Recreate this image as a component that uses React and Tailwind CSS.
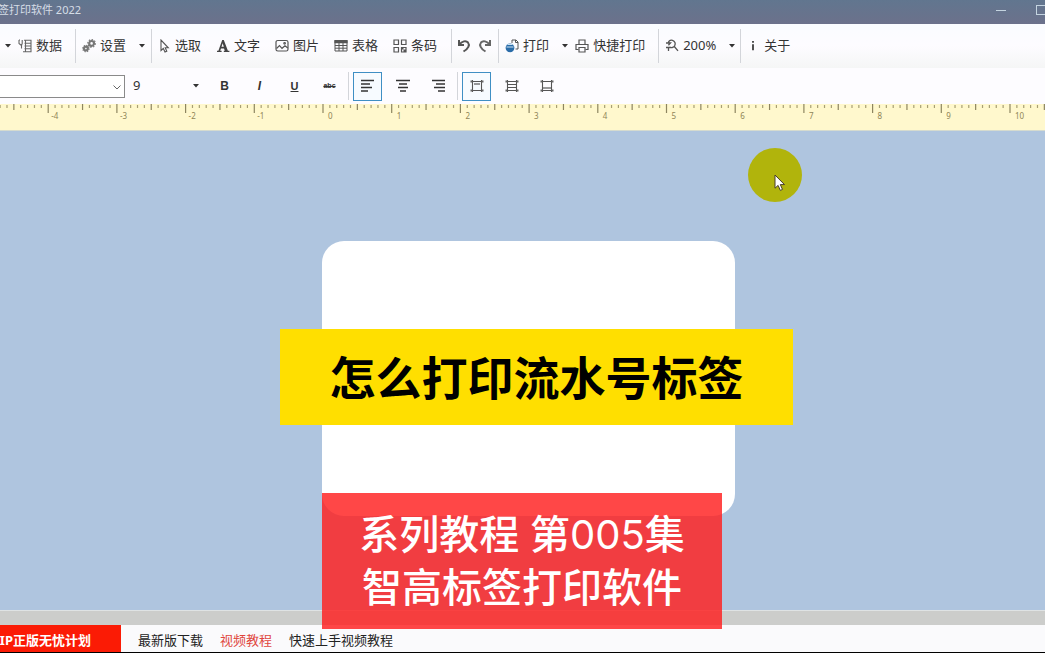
import React from "react";

const MM_PER_CM = 10;
const CM = 68.7;
const RULER_ORIGIN = 323;

const minorTick = "#a79f74";
const majorTick = "#8d8560";

const footerLinks = [
  { text: "最新版下载", className: "text-[#222]" },
  { text: "视频教程", className: "text-[#e0453c]" },
  { text: "快速上手视频教程", className: "text-[#222]" },
];

function Icon({ children, size = 14 }) {
  return (
    <svg
      width={size}
      height={size}
      viewBox="0 0 14 14"
      fill="none"
      stroke="#555"
      strokeWidth="1.2"
      className="shrink-0"
      aria-hidden="true"
    >
      {children}
    </svg>
  );
}

const DataIcon = () => (
  <Icon>
    <path d="M1 1v3.5l2.5 2v3M1 1h1M4.2 1v3.5l-.7 2M6 1.2h7v11.6H5M6.5 4.2H13M6.5 7H13M6.5 9.8H13M7.5 1.2v11.6" stroke="#666" strokeWidth="1.1" />
  </Icon>
);

const SettingsIcon = () => (
  <Icon>
    <circle cx="9.6" cy="4.4" r="2.4" stroke="#777" strokeWidth="2.2" />
    <circle cx="9.6" cy="4.4" r="3.8" stroke="#777" strokeWidth="1.2" strokeDasharray="1.5 1.4" />
    <circle cx="3.9" cy="9.6" r="1.9" stroke="#777" strokeWidth="2.2" />
    <circle cx="3.9" cy="9.6" r="3.2" stroke="#777" strokeWidth="1.1" strokeDasharray="1.3 1.2" />
  </Icon>
);

const SelectIcon = () => (
  <Icon>
    <path d="M4 1v10.5l2.3-2 1.7 3.6 1.8-.9-1.6-3.4h3.1z" strokeWidth="1.1" />
  </Icon>
);

const TextIcon = () => (
  <Icon>
    <path d="M7.8 1H6.2L2.4 11.7H1V13h4.6v-1.3H4.2l.8-2.2h3l.8 2.2H7.8V13h5.6v-1.3h-1.5zM5.5 7.8l1.2-3.6 1.1 3.6z" fill="#444" stroke="none" />
  </Icon>
);

const PictureIcon = () => (
  <Icon>
    <rect x="1" y="1.5" width="12" height="10.5" rx="1.8" />
    <path d="M1.5 9.5l3-3 2.5 2.8 3-2.6 2.8 2.3" />
    <circle cx="9.6" cy="4.3" r=".8" />
  </Icon>
);

const TableIcon = () => (
  <Icon>
    <path d="M1 1.5h12v2.2H1z" fill="#555" />
    <path d="M1 1.5h12v10.5H1zM1 6.5h12M1 9.2h12M5 3.5V12M9 3.5V12" strokeWidth="1" />
  </Icon>
);

const BarcodeIcon = () => (
  <Icon>
    <path d="M1 1h4.5v4.5H1zM8.5 1H13v4.5H8.5zM1 8.5h4.5V13H1z" />
    <path d="M8.5 8.5H13V13H8.5z" />
    <path d="M8 8h2.5v2.5H8zM10.5 10.5H13V13h-2.5z" fill="#555" stroke="none" />
  </Icon>
);

const UndoIcon = () => (
  <Icon>
    <path d="M2 1v5h5" strokeWidth="2" stroke="#555" />
    <path d="M2.3 5.7C5 2 9 1.2 11 3.5c2 2.5.5 6-4.5 9" strokeWidth="2" stroke="#555" />
  </Icon>
);

const RedoIcon = () => (
  <Icon>
    <path d="M12 1v5H7" strokeWidth="2" stroke="#666" />
    <path d="M11.7 5.7C9 2 5 1.2 3 3.5c-2 2.5-.5 6 4.5 9" strokeWidth="2" stroke="#666" />
  </Icon>
);

const PrintIcon = () => (
  <Icon>
    <path d="M7 4V1h4l2 2v7h-2.5M10.5 1v2.5H13" strokeWidth="1" />
    <circle cx="5" cy="8.8" r="4.4" fill="#2a6ca8" stroke="none" />
    <path d="M1.5 8h7M2.5 5.4h5" stroke="#cfe3f3" />
  </Icon>
);

const QuickPrintIcon = () => (
  <Icon>
    <path d="M4 5.5V1h6v4.5M3.5 10.5H1v-5h12v5h-2.5" />
    <path d="M4 8.5h6V13H4z" />
  </Icon>
);

const ZoomIcon = () => (
  <Icon>
    <path d="M3.2 4C4 1.5 6 .9 7.5 1.3 10 2 10.8 4.6 9.6 6.8 8.5 8.7 6 9 4.5 8M1 4h4.5L3.4 6.3M1 8.5h5M3.5 8.5V12M9.3 7.5l3.7 4.3" strokeWidth="1.3" />
  </Icon>
);

const AboutIcon = () => (
  <Icon>
    <path d="M7 2v1.8M7 5.2v6" stroke="#333" strokeWidth="1.7" />
  </Icon>
);

// horizontal text alignment, each entry is [x1, x2] of one row
function AlignIcon({ rows }) {
  return (
    <Icon size={14}>
      {rows.map(([x1, x2], i) => (
        <path key={i} d={`M${x1} ${1.5 + i * 3.5}H${x2}`} stroke="#333" strokeWidth="1.5" />
      ))}
    </Icon>
  );
}

// box with corner handles, `d` is the content inside of it
function BoxIcon({ d }) {
  return (
    <Icon size={14}>
      <path d="M2.5 1v12M11.5 1v12M1 2.5h12M1 11.5h12" stroke="#555" strokeWidth="1.1" />
      <path d="M.5 1.5h2v2h-2zM11.5 1.5h2v2h-2zM.5 10.5h2v2h-2zM11.5 10.5h2v2h-2z" fill="#666" stroke="none" />
      <path d={d} stroke="#555" strokeWidth="1.2" />
    </Icon>
  );
}

function ToolButton({ icon, text }) {
  return (
    <button className="flex items-center gap-1 whitespace-nowrap">
      {icon}
      <span>{text}</span>
    </button>
  );
}

function IconButton({ icon, label }) {
  return (
    <button aria-label={label}>
      {icon}
    </button>
  );
}

function Caret({ label }) {
  return (
    <button aria-label={label} className="flex w-2 shrink-0 justify-center">
      <svg width="6" height="4" viewBox="0 0 6 4" aria-hidden="true">
        <path d="M0 0h6L3 3.5z" fill="#333" />
      </svg>
    </button>
  );
}

function FormatButton({ label, active, children }) {
  return (
    <button
      aria-label={label}
      aria-pressed={!!active}
      className={
        active
          ? "flex h-[29px] w-[29px] shrink-0 items-center justify-center border border-[#3f8fc4] bg-[#f7fbff]"
          : "flex h-[29px] w-[29px] shrink-0 items-center justify-center"
      }
    >
      {children}
    </button>
  );
}

function TitleBar() {
  return (
    <header className="flex h-6 items-center justify-between overflow-hidden bg-linear-to-b from-[#61768f] to-[#6c718b] text-[11px] text-[#d5dde6]">
      <h1 className="-ml-0.5 -mt-1 whitespace-nowrap">签打印软件 2022</h1>
      <div className="-mr-1 -mt-1 flex items-center gap-[30px]">
        <button aria-label="最小化" className="h-px w-2.5 bg-[#c4d4e0]" />
        <button aria-label="最大化" className="h-2.5 w-[13px] border border-[#c4d4e0]" />
      </div>
    </header>
  );
}

function Toolbar() {
  const group = "flex h-[34px] shrink-0 items-center border-r border-[#d3d5da]";

  return (
    <nav className="flex h-11 items-center overflow-hidden bg-linear-to-b from-[#fafcff] via-[#fdfcff] to-[#f5f6f6] text-[13px] text-[#333]">
      <div className={`${group} gap-1.5 pl-1 pr-[13px]`}>
        <Caret label="更多" />
        <ToolButton icon={<DataIcon />} text="数据" />
      </div>
      <div className={`${group} gap-3 pl-1.5 pr-[5px]`}>
        <ToolButton icon={<SettingsIcon />} text="设置" />
        <Caret label="设置选项" />
      </div>
      <div className={`${group} gap-[15px] pl-[5px] pr-3.5`}>
        <ToolButton icon={<SelectIcon />} text="选取" />
        <ToolButton icon={<TextIcon />} text="文字" />
        <ToolButton icon={<PictureIcon />} text="图片" />
        <ToolButton icon={<TableIcon />} text="表格" />
        <ToolButton icon={<BarcodeIcon />} text="条码" />
      </div>
      <div className={`${group} gap-[7px] pl-[5px] pr-1.5`}>
        <IconButton icon={<UndoIcon />} label="撤销" />
        <IconButton icon={<RedoIcon />} label="重做" />
      </div>
      <div className={`${group} gap-1.5 pl-1.5 pr-[13px]`}>
        <div className="flex items-center gap-3">
          <ToolButton icon={<PrintIcon />} text="打印" />
          <Caret label="打印选项" />
        </div>
        <ToolButton icon={<QuickPrintIcon />} text="快捷打印" />
      </div>
      <div className={`${group} gap-3 pl-1.5 pr-1`}>
        <ToolButton icon={<ZoomIcon />} text="200%" />
        <Caret label="缩放选项" />
      </div>
      <div className="flex items-center pl-[5px]">
        <ToolButton icon={<AboutIcon />} text="关于" />
      </div>
    </nav>
  );
}

function FormatBar() {
  const group = "flex h-7 shrink-0 items-center gap-1.5 border-r border-[#d3d5da]";

  return (
    <div className="flex h-9 items-center bg-[#fdfcff] text-[13px] text-[#333]">
      <div className="relative w-[125px] shrink-0">
        <select
          aria-label="字体"
          className="block h-[23px] w-full appearance-none border border-l-0 border-[#8a8a8a] bg-white"
        >
          <option></option>
        </select>
        <svg width="8" height="5" viewBox="0 0 8 5" fill="none" stroke="#666" className="pointer-events-none absolute right-1 top-2.5" aria-hidden="true">
          <path d="M.5.5L4 4 7.5.5" />
        </svg>
      </div>
      <div className="relative w-[85px] shrink-0 pl-2">
        <select aria-label="字号" className="block w-full appearance-none">
          <option>9</option>
        </select>
        <svg width="6" height="4" viewBox="0 0 6 4" className="pointer-events-none absolute right-[11px] top-2" aria-hidden="true">
          <path d="M0 0h6L3 3.5z" fill="#333" />
        </svg>
      </div>

      <div className={`${group} pr-1 font-['Liberation_Sans',sans-serif]`}>
        <FormatButton label="加粗">
          <b className="text-xs">B</b>
        </FormatButton>
        <FormatButton label="斜体">
          <b className="text-xs italic">I</b>
        </FormatButton>
        <FormatButton label="下划线">
          <b className="text-[11px] underline">U</b>
        </FormatButton>
        <FormatButton label="删除线">
          <b className="text-[7px] line-through">abc</b>
        </FormatButton>
      </div>
      <div className={`${group} pl-1 pr-[5px]`}>
        <FormatButton label="左对齐" active>
          <AlignIcon rows={[[0, 13], [0, 9], [0, 11], [0, 7]]} />
        </FormatButton>
        <FormatButton label="居中对齐">
          <AlignIcon rows={[[0, 14], [3, 11], [2, 12], [4, 10]]} />
        </FormatButton>
        <FormatButton label="右对齐">
          <AlignIcon rows={[[1, 14], [5, 14], [3, 14], [7, 14]]} />
        </FormatButton>
      </div>
      <div className="flex items-center gap-1.5 pl-1">
        <FormatButton label="顶部对齐" active>
          <BoxIcon d="M4 5h6" />
        </FormatButton>
        <FormatButton label="垂直居中">
          <BoxIcon d="M3 5.5h8M3 8.5h8" />
        </FormatButton>
        <FormatButton label="底部对齐">
          <BoxIcon d="M3 9h8" />
        </FormatButton>
      </div>
    </div>
  );
}

function Ruler() {
  // only draw what fits, a label needs about 15px
  const width = window.innerWidth;
  const lastMm = Math.floor(((width - RULER_ORIGIN) / CM) * MM_PER_CM);
  const ticks = [];
  for (let mm = -47; mm <= lastMm; mm++) {
    const x = RULER_ORIGIN + (mm * CM) / MM_PER_CM;
    const isCm = mm % 10 === 0;
    const isHalf = mm % 5 === 0;
    ticks.push(
      <path
        key={mm}
        d={`M${x} ${isCm || isHalf ? 0 : 1}V${isCm ? 9 : isHalf ? 6 : 4}`}
        stroke={isCm || isHalf ? majorTick : minorTick}
        strokeWidth="1.2"
      />
    );
    if (isCm && x + 15 < width) {
      const cm = mm / 10;
      ticks.push(
        <text key={`t${mm}`} x={x + (cm < 0 ? 3 : 5)} y="15" fontSize="8" fill="#8f8557">
          {cm}
        </text>
      );
    }
  }

  return (
    <svg className="block h-[27px] w-full border-b border-[#d5dbcf] bg-[#fff8cd]" aria-label="标尺">
      {ticks}
    </svg>
  );
}

function Pointer() {
  return (
    <div className="absolute left-[748px] top-[17px] h-[54px] w-[54px] rounded-full bg-[#b1b40c]">
      <svg width="12" height="18" viewBox="0 0 12 18" className="absolute left-[26px] top-[26px]" aria-hidden="true">
        <path d="M1 1v13.2l3.1-2.8 2.2 5 2.2-1-2.2-4.8h4.2z" fill="#fff" stroke="#4a3f2a" />
      </svg>
    </div>
  );
}

function Canvas() {
  return (
    <main className="relative flex-1 bg-[#afc5df] pb-[94px] pt-[110px]">
      <div className="ml-[322px] h-[275px] w-[413px] rounded-[22px] bg-white" />
      <Pointer />
      <div className="absolute left-[280px] top-[198px] flex h-24 w-[513px] items-center justify-center bg-[#ffdf00]">
        <p className="whitespace-nowrap text-[46px] font-bold leading-none text-black">怎么打印流水号标签</p>
      </div>
      <div className="absolute left-[322px] top-[362px] z-10 flex h-[136px] w-[400px] flex-col items-center justify-center bg-[#ff1e1e]/82 font-['Inter','Noto_Sans_CJK_SC',sans-serif] text-[40px] font-medium leading-[53px] text-white">
        <p className="whitespace-nowrap">
          系列教程 第<span className="font-normal">005</span>集
        </p>
        <p className="whitespace-nowrap">智高标签打印软件</p>
      </div>
    </main>
  );
}

function Footer() {
  return (
    <footer>
      <div className="h-[15px] border-t border-[#dfe3e4] bg-[#cccdcb]" />
      <div className="flex h-7 items-center border-b border-black bg-[#fafafc] text-[13px]">
        <a href="#vip" className="flex h-full w-[121px] shrink-0 items-center justify-end overflow-hidden whitespace-nowrap bg-[#fb1b05] pr-[30px] pt-1 font-bold text-white">
          VIP正版无忧计划
        </a>
        <div className="flex gap-[17px] pl-[17px] pt-1">
          {footerLinks.map((link) => (
            <a key={link.text} href="#help" className={link.className}>
              {link.text}
            </a>
          ))}
        </div>
      </div>
    </footer>
  );
}

export default function App() {
  return (
    <div className="flex min-h-screen flex-col overflow-hidden font-['Noto_Sans','Noto_Sans_CJK_SC',sans-serif]">
      <TitleBar />
      <Toolbar />
      <FormatBar />
      <Ruler />
      <Canvas />
      <Footer />
    </div>
  );
}
